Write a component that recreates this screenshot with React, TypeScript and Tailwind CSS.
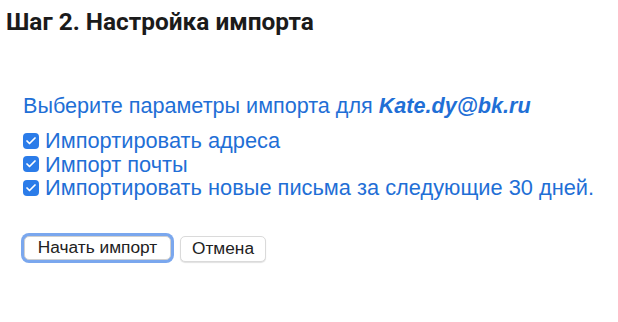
import { Check } from 'lucide-react';

const options = [
  'Импортировать адреса',
  'Импорт почты',
  'Импортировать новые письма за следующие 30 дней.',
];

function Box() {
  return (
    <span className="mr-[6px] inline-flex h-[16px] w-[16px] shrink-0 items-center justify-center rounded-[4px] bg-[#2b7ce9]">
      <Check size={12} strokeWidth={3.5} className="text-white" />
    </span>
  );
}

export default function App() {
  return (
    <div className="h-[322px] w-[618px] bg-white font-['Roboto',sans-serif]">
      <h1 className="pl-[6px] pt-[8px] text-[24.4px] font-bold leading-[28px] text-[#1b1b1b]">
        Шаг 2. Настройка импорта
      </h1>

      <div className="pl-[23px] pt-[57px] font-['Liberation_Sans',sans-serif] text-[#1f6fd6]">
        <p className="text-[21.6px] leading-[26px]">
          Выберите параметры импорта для <b className="italic">Kate.dy@bk.ru</b>
        </p>
        <ul className="mt-[10px] text-[21.8px]">
          {options.map((o) => (
            <li key={o} className="flex items-center leading-[23.5px]">
              <Box />
              {o}
            </li>
          ))}
        </ul>
      </div>

      <div className="flex gap-[9px] pl-[24px] pt-[36px] font-['Liberation_Sans',sans-serif] text-[17.3px] text-[#222]">
        <button className="h-[24px] w-[147px] rounded-[5px] border border-[#d0d0d0] bg-white leading-none shadow-[0_0_0_3px_#7aa7ee]">
          Начать импорт
        </button>
        <button className="h-[26px] w-[86px] rounded-[5px] border border-[#dadada] bg-white leading-none shadow-[0_1px_1px_rgba(0,0,0,0.12)]">
          Отмена
        </button>
      </div>
    </div>
  );
}
